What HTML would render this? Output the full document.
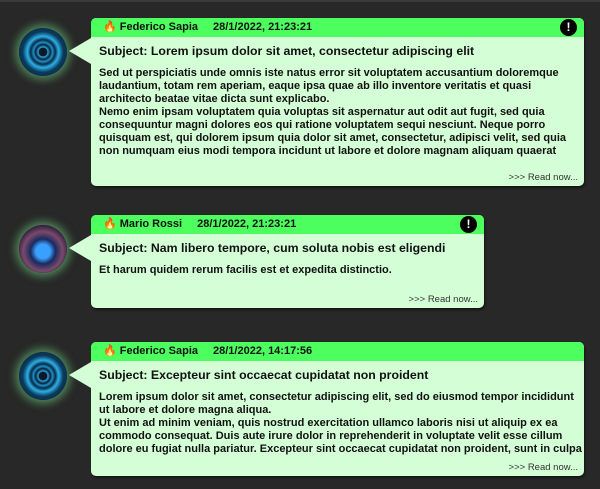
<!DOCTYPE html>
<html><head><meta charset="utf-8"><style>
html,body{margin:0;padding:0}
body{width:600px;height:489px;background:#272827;position:relative;overflow:hidden;font-family:"Liberation Sans",Arial,sans-serif;border-top:2px solid #3a3a3a;box-sizing:border-box}
.av{position:absolute;left:19px;width:48px;height:48px;border-radius:50%;box-shadow:0 0 9px 3px rgba(120,230,140,.55)}
.a1{background:radial-gradient(circle,#0a1a2a 0 12%,#2aa8e0 14%,#062038 22%,#1e90c8 28%,#082a44 36%,#2bb0e8 46%,#0b3a5c 60%,#0a1b2c 100%)}
.a2{background:radial-gradient(circle at 50% 55%,#3aa0ff 0 20%,#1a2a60 35%,#7a4a6a 55%,#2a1a3a 75%,#111 100%)}
.card{position:absolute;left:91px;background:#d4ffd6;border-radius:5px;box-shadow:1px 2px 2px rgba(0,0,0,.5)}
.card:before{content:"";position:absolute;left:-22px;top:20px;border-right:22px solid #d4ffd6;border-top:13px solid transparent;border-bottom:13px solid transparent}
.hd{background:#4cff5e;height:19px;border-radius:5px 5px 0 0;font-weight:bold;font-size:11px;line-height:19px;padding-left:12px;position:relative;color:#111}
.hd .d{margin-left:15px}
.ex{position:absolute;right:7px;top:1px;width:17px;height:17px;border-radius:50%;background:#000;color:#fff;font-size:12px;line-height:17px;text-align:center}
.sb{font-weight:bold;font-size:12.3px;padding:7px 8px 0;color:#111}
.bd{font-weight:bold;font-size:11px;line-height:13px;padding:9px 2px 0 8px;color:#111}
.rn{position:absolute;right:6px;bottom:3px;font-size:9.5px;color:#333}
</style></head><body>
<div class="av a1" style="top:26px"></div>
<div class="card" style="top:16px;width:493px;height:168px">
<div class="hd">🔥 Federico Sapia<span class="d">28/1/2022, 21:23:21</span><span class="ex">!</span></div>
<div class="sb">Subject: Lorem ipsum dolor sit amet, consectetur adipiscing elit</div>
<div class="bd">Sed ut perspiciatis unde omnis iste natus error sit voluptatem accusantium doloremque laudantium, totam rem aperiam, eaque ipsa quae ab illo inventore veritatis et quasi architecto beatae vitae dicta sunt explicabo.<br>Nemo enim ipsam voluptatem quia voluptas sit aspernatur aut odit aut fugit, sed quia consequuntur magni dolores eos qui ratione voluptatem sequi nesciunt. Neque porro quisquam est, qui dolorem ipsum quia dolor sit amet, consectetur, adipisci velit, sed quia non numquam eius modi tempora incidunt ut labore et dolore magnam aliquam quaerat</div>
<div class="rn">&gt;&gt;&gt; Read now...</div>
</div>
<div class="av a2" style="top:223px"></div>
<div class="card" style="top:213px;width:393px;height:93px">
<div class="hd">🔥 Mario Rossi<span class="d">28/1/2022, 21:23:21</span><span class="ex">!</span></div>
<div class="sb">Subject: Nam libero tempore, cum soluta nobis est eligendi</div>
<div class="bd">Et harum quidem rerum facilis est et expedita distinctio.</div>
<div class="rn">&gt;&gt;&gt; Read now...</div>
</div>
<div class="av a1" style="top:350px"></div>
<div class="card" style="top:340px;width:493px;height:134px">
<div class="hd">🔥 Federico Sapia<span class="d">28/1/2022, 14:17:56</span></div>
<div class="sb">Subject: Excepteur sint occaecat cupidatat non proident</div>
<div class="bd">Lorem ipsum dolor sit amet, consectetur adipiscing elit, sed do eiusmod tempor incididunt ut labore et dolore magna aliqua.<br>Ut enim ad minim veniam, quis nostrud exercitation ullamco laboris nisi ut aliquip ex ea commodo consequat. Duis aute irure dolor in reprehenderit in voluptate velit esse cillum dolore eu fugiat nulla pariatur. Excepteur sint occaecat cupidatat non proident, sunt in culpa</div>
<div class="rn">&gt;&gt;&gt; Read now...</div>
</div>
</body></html>
